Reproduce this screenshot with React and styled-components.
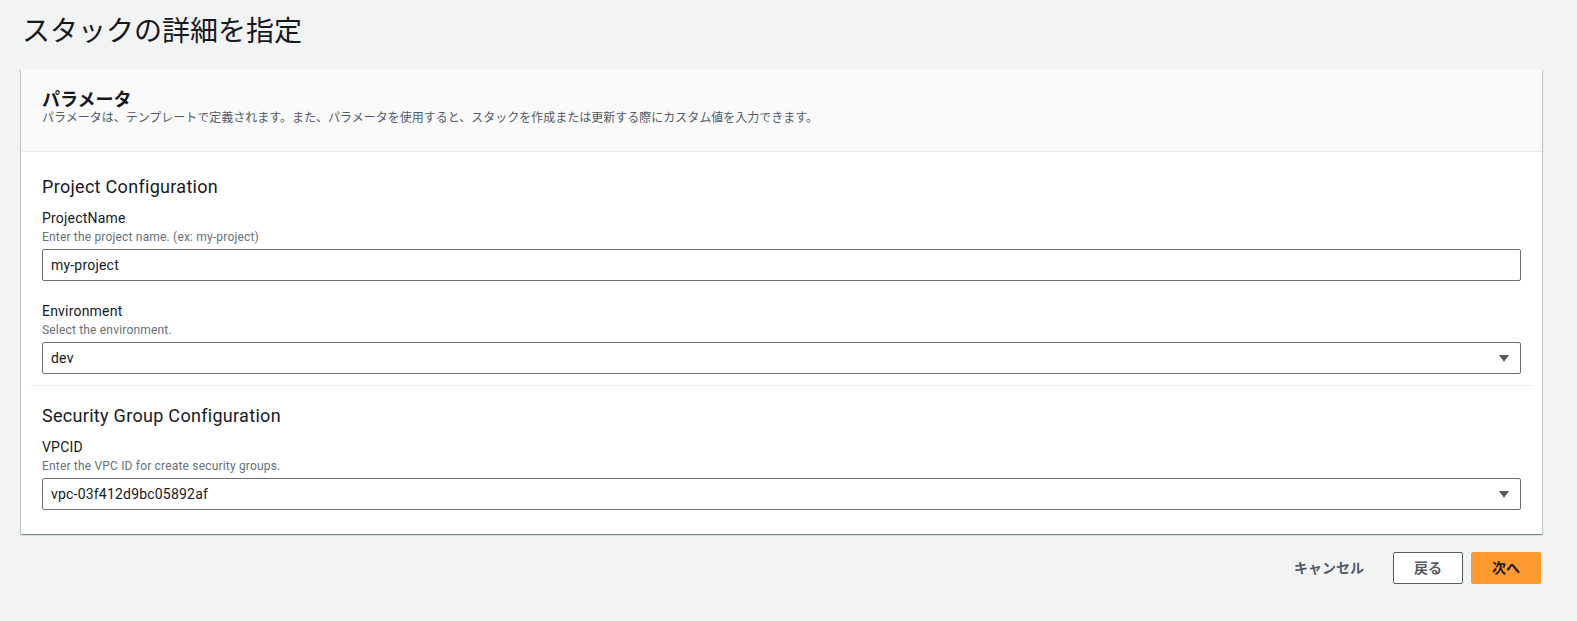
import styled, { createGlobalStyle } from "styled-components";

const GlobalStyle = createGlobalStyle`
  body {
    margin: 0;
    background: #f2f3f3;
    font-family: Roboto, "Noto Sans CJK JP", sans-serif;
    color: #16191f;
  }
  * { box-sizing: border-box; }
`;

const fields = [
  {
    section: "Project Configuration",
    items: [
      { label: "ProjectName", hint: "Enter the project name. (ex: my-project)", value: "my-project" },
      { label: "Environment", hint: "Select the environment.", value: "dev", select: true },
    ],
  },
  {
    section: "Security Group Configuration",
    items: [
      { label: "VPCID", hint: "Enter the VPC ID for create security groups.", value: "vpc-03f412d9bc05892af", select: true },
    ],
  },
];

const Field = ({ label, hint, value, select }) => (
  <FieldWrap>
    <Label>{label}</Label>
    <Hint>{hint}</Hint>
    <InputBox>
      <span>{value}</span>
      {select && (
        <svg width="10" height="7" viewBox="0 0 10 7">
          <path d="M0 0h10L5 7z" fill="#545b64" />
        </svg>
      )}
    </InputBox>
  </FieldWrap>
);

const App = () => {
  return (
    <Page>
      <GlobalStyle />
      <Title>スタックの詳細を指定</Title>
      <Card>
        <CardHeader>
          <CardTitle>パラメータ</CardTitle>
          <CardDesc>
            パラメータは、テンプレートで定義されます。また、パラメータを使用すると、スタックを作成または更新する際にカスタム値を入力できます。
          </CardDesc>
        </CardHeader>
        <CardBody>
          {fields.map((s) => (
            <Section key={s.section}>
              <SectionTitle>{s.section}</SectionTitle>
              {s.items.map((f) => (
                <Field key={f.label} {...f} />
              ))}
            </Section>
          ))}
        </CardBody>
      </Card>
      <Actions>
        <Button $variant="link">キャンセル</Button>
        <Button>戻る</Button>
        <Button $variant="primary">次へ</Button>
      </Actions>
    </Page>
  );
};

const Page = styled.div`
  padding: 14px 35px 0 21px;
`;

const Title = styled.h1`
  margin: 0 0 19px 1px;
  font-size: 28px;
  line-height: 36px;
  font-weight: 400;
  color: #16191f;
`;

const Card = styled.div`
  background: #fff;
  box-shadow: 0 1px 1px 0 rgba(0, 28, 36, 0.3), 1px 1px 1px 0 rgba(0, 28, 36, 0.15),
    -1px 1px 1px 0 rgba(0, 28, 36, 0.15);
`;

const CardHeader = styled.div`
  background: #fafafa;
  border-bottom: 1px solid #eaeded;
  padding: 20px 21px 26px;
`;

const CardTitle = styled.h2`
  margin: 0;
  font-size: 18px;
  line-height: 22px;
  font-weight: 700;
`;

const CardDesc = styled.p`
  margin: 0;
  font-size: 12px;
  line-height: 14px;
  color: #545b64;
`;

const CardBody = styled.div`
  padding: 24px 0 24px;
`;

const Section = styled.div`
  display: flex;
  flex-direction: column;
  gap: 10px;
  padding: 0 21px 11px;
  & + & {
    border-top: 1px solid #eaeded;
    margin: 0 10px;
    padding: 19px 11px 0;
  }
`;

const SectionTitle = styled.h3`
  margin: 0;
  font-size: 18px;
  line-height: 22px;
  font-weight: 400;
  letter-spacing: 0.3px;
`;

const FieldWrap = styled.div`
  display: flex;
  flex-direction: column;
  & + & {
    margin-top: 10px;
  }
`;

const Label = styled.div`
  font-size: 14px;
  line-height: 20px;
  color: #16191f;
  letter-spacing: 0.2px;
  margin-bottom: 1px;
`;

const Hint = styled.div`
  font-size: 12px;
  line-height: 16px;
  color: #687078;
  letter-spacing: 0.18px;
  margin-bottom: 4px;
`;

const InputBox = styled.div`
  height: 32px;
  border: 1px solid #687078;
  border-radius: 2px;
  background: #fff;
  display: flex;
  align-items: center;
  justify-content: space-between;
  padding: 0 11px 0 8px;
  font-size: 14px;
  letter-spacing: 0.2px;
  color: #16191f;
`;

const Actions = styled.div`
  display: flex;
  justify-content: flex-end;
  gap: 8px;
  margin-top: 18px;
  margin-right: 1px;
`;

const Button = styled.button`
  font-family: inherit;
  font-size: 14px;
  line-height: 22px;
  font-weight: 700;
  padding: 4px 20px;
  border-radius: 2px;
  cursor: pointer;
  border: 1px solid
    ${(p) => (p.$variant === "link" ? "transparent" : p.$variant === "primary" ? "#ff9a2e" : "#545b64")};
  background: ${(p) => (p.$variant === "link" ? "transparent" : p.$variant === "primary" ? "#ff9a2e" : "#fff")};
  color: ${(p) => (p.$variant === "primary" ? "#16191f" : "#545b64")};
`;

export default App;
